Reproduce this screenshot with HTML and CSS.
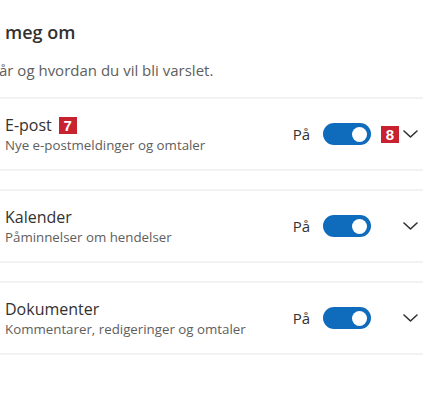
FILE: index.html
```html
<!DOCTYPE html>
<html lang="no">
<head>
<meta charset="utf-8">
<link rel="stylesheet" href="styles.css">
</head>
<body>
<main class="page">
  <header class="intro">
    <h1 class="intro-title">meg om</h1>
    <p class="intro-text">år og hvordan du vil bli varslet.</p>
  </header>

  <section class="card">
    <div class="card-text">
      <div class="card-title-line"><span class="card-title">E-post</span><span class="badge">7</span></div>
      <div class="card-sub">Nye e-postmeldinger og omtaler</div>
    </div>
    <div class="controls">
      <span class="state">På</span>
      <span class="toggle"><span class="knob"></span></span>
      <span class="slot"><span class="badge">8</span></span>
      <svg class="chevron" viewBox="0 0 15 8" width="15" height="8"><polyline points="1,1 7.5,7 14,1"/></svg>
    </div>
  </section>

  <section class="card">
    <div class="card-text">
      <div class="card-title-line"><span class="card-title">Kalender</span></div>
      <div class="card-sub">Påminnelser om hendelser</div>
    </div>
    <div class="controls">
      <span class="state">På</span>
      <span class="toggle"><span class="knob"></span></span>
      <span class="slot"></span>
      <svg class="chevron" viewBox="0 0 15 8" width="15" height="8"><polyline points="1,1 7.5,7 14,1"/></svg>
    </div>
  </section>

  <section class="card">
    <div class="card-text">
      <div class="card-title-line"><span class="card-title">Dokumenter</span></div>
      <div class="card-sub">Kommentarer, redigeringer og omtaler</div>
    </div>
    <div class="controls">
      <span class="state">På</span>
      <span class="toggle"><span class="knob"></span></span>
      <span class="slot"></span>
      <svg class="chevron" viewBox="0 0 15 8" width="15" height="8"><polyline points="1,1 7.5,7 14,1"/></svg>
    </div>
  </section>
</main>
</body>
</html>
```

FILE: styles.css
```css
html, body {
  margin: 0;
  padding: 0;
  background: #ffffff;
}
body {
  font-family: "Open Sans", "Noto Sans", sans-serif;
  color: #323130;
  overflow: hidden;
  width: 423px;
  height: 400px;
}
.page {
  display: flex;
  flex-direction: column;
}
.intro {
  padding: 20px 0 0 5px;
  height: 75px;
  box-sizing: border-box;
}
.intro-title {
  margin: 0;
  font-size: 18px;
  font-weight: 600;
  line-height: 24px;
  color: #323130;
}
.intro-text {
  margin: 16px 0 0 -6px;
  font-size: 15px;
  line-height: 20px;
  color: #605e5c;
}
.card {
  display: flex;
  align-items: center;
  justify-content: space-between;
  height: 74px;
  box-sizing: border-box;
  border-top: 2px solid #f3f2f1;
  border-bottom: 2px solid #f3f2f1;
  margin-top: 22px;
  padding: 0 5px;
}
.card + .card {
  margin-top: 18px;
}
.card-text {
  display: flex;
  flex-direction: column;
}
.card-title-line {
  display: flex;
  align-items: center;
  gap: 7px;
}
.card-title {
  font-size: 16px;
  line-height: 22px;
  color: #323130;
}
.card-sub {
  font-size: 13.3px;
  line-height: 18px;
  color: #605e5c;
}
.badge {
  display: inline-flex;
  align-items: center;
  justify-content: center;
  width: 18px;
  height: 17px;
  background: #c8212f;
  color: #ffffff;
  font-family: "Liberation Sans", Arial, sans-serif;
  font-weight: 700;
  font-size: 15px;
  line-height: 1;
}
.controls {
  display: flex;
  align-items: center;
}
.state {
  font-size: 15px;
  color: #323130;
  margin-right: 13px;
}
.toggle {
  display: flex;
  align-items: center;
  justify-content: flex-end;
  width: 48px;
  height: 22px;
  box-sizing: border-box;
  padding-right: 4px;
  border-radius: 11px;
  background: #0f6cbd;
}
.knob {
  width: 15px;
  height: 15px;
  border-radius: 50%;
  background: #ffffff;
}
.slot {
  display: flex;
  justify-content: flex-end;
  width: 32px;
  padding-right: 4px;
  box-sizing: border-box;
}
.chevron {
  fill: none;
  stroke: #323130;
  stroke-width: 1.6;
  stroke-linecap: round;
  stroke-linejoin: round;
}
```
